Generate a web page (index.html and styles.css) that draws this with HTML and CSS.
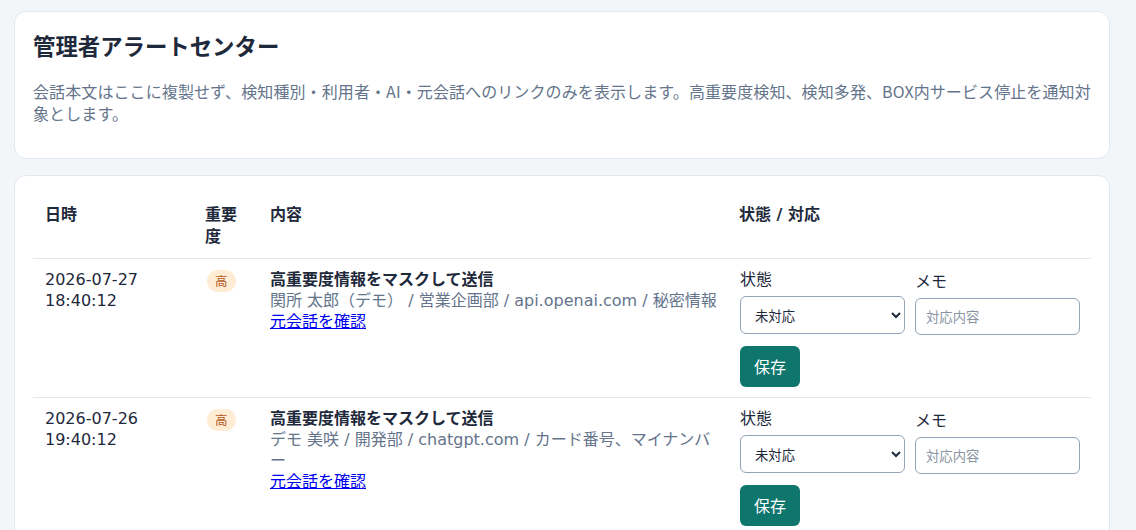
FILE: index.html
```html
<!DOCTYPE html>
<html lang="ja">
<head>
<meta charset="utf-8">
<title>管理者アラートセンター</title>
<link rel="stylesheet" href="styles.css">
</head>
<body>
<main class="page">
  <section class="card intro">
    <h1 class="title">管理者アラートセンター</h1>
    <p class="desc">会話本文はここに複製せず、検知種別・利用者・AI・元会話へのリンクのみを表示します。高重要度検知、検知多発、BOX内サービス停止を通知対象とします。</p>
  </section>
  <section class="card">
    <table class="alerts">
      <colgroup>
        <col class="c-date"><col class="c-sev"><col class="c-body"><col class="c-state">
      </colgroup>
      <thead>
        <tr><th>日時</th><th>重要度</th><th>内容</th><th>状態 / 対応</th></tr>
      </thead>
      <tbody>
        <tr>
          <td>2026-07-27<br>18:40:12</td>
          <td><span class="badge">高</span></td>
          <td class="body-cell">
            <div class="a-title">高重要度情報をマスクして送信</div>
            <div class="a-sub">関所 太郎（デモ） / 営業企画部 / api.openai.com / 秘密情報</div>
            <a href="#" class="a-link">元会話を確認</a>
          </td>
          <td>
            <form class="resp">
              <label class="field"><span class="lbl">状態</span>
                <select class="sel"><option>未対応</option><option>対応中</option><option>完了</option></select>
              </label>
              <label class="field memo"><span class="lbl">メモ</span>
                <input class="inp" type="text" placeholder="対応内容">
              </label>
              <button type="button" class="save">保存</button>
            </form>
          </td>
        </tr>
        <tr>
          <td>2026-07-26<br>19:40:12</td>
          <td><span class="badge">高</span></td>
          <td class="body-cell">
            <div class="a-title">高重要度情報をマスクして送信</div>
            <div class="a-sub">デモ 美咲 / 開発部 / chatgpt.com / カード番号、マイナンバー</div>
            <a href="#" class="a-link">元会話を確認</a>
          </td>
          <td>
            <form class="resp">
              <label class="field"><span class="lbl">状態</span>
                <select class="sel"><option>未対応</option><option>対応中</option><option>完了</option></select>
              </label>
              <label class="field memo"><span class="lbl">メモ</span>
                <input class="inp" type="text" placeholder="対応内容">
              </label>
              <button type="button" class="save">保存</button>
            </form>
          </td>
        </tr>
      </tbody>
    </table>
  </section>
</main>
</body>
</html>
```
FILE: styles.css
```css
html, body {
  margin: 0;
  background: #f3f6f9;
}
body {
  font-family: "DejaVu Sans", "Noto Sans CJK JP", sans-serif;
  font-size: 16px;
  color: #1e293b;
}
.page {
  padding: 11px 14px;
  width: 1096px;
  display: flex;
  flex-direction: column;
  gap: 16px;
}
.card {
  background: #ffffff;
  border: 1px solid #e2e8f0;
  border-radius: 12px;
  padding: 18px;
}
.title {
  margin: 0;
  font-family: "Noto Sans CJK JP", sans-serif;
  font-size: 22.4px;
  line-height: 30px;
  font-weight: 700;
  color: #1e293b;
}
.desc {
  margin: 20px 0 16px;
  font-family: "Noto Sans CJK JP", sans-serif;
  font-size: 16px;
  line-height: 22px;
  letter-spacing: 0.1px;
  color: #64748b;
}
.alerts {
  width: 100%;
  border-collapse: collapse;
  table-layout: fixed;
}
.c-date { width: 160px; }
.c-sev { width: 65px; }
.c-body { width: 469px; }
.c-state { width: 364px; }
.alerts th {
  text-align: left;
  vertical-align: top;
  font-weight: 700;
  line-height: 22px;
  padding: 10px 12px;
  border-bottom: 1px solid #e2e8f0;
}
.alerts td {
  vertical-align: top;
  line-height: 21px;
  padding: 10px 12px;
  border-bottom: 1px solid #e2e8f0;
}
.alerts td.body-cell {
  padding-right: 8px;
}
.badge {
  display: inline-block;
  margin: 1px 0 0 2px;
  padding: 3px 8px;
  font-family: "Noto Sans CJK JP", sans-serif;
  font-size: 12.5px;
  line-height: 16px;
  border-radius: 999px;
  background: #feecd5;
  color: #b4581c;
}
.a-title {
  font-weight: 700;
}
.a-sub {
  color: #64748b;
}
.a-link {
  color: #0000ee;
}
.resp {
  display: grid;
  grid-template-columns: 165px 165px;
  column-gap: 10px;
  align-items: start;
  margin-left: 1px;
}
.field {
  display: flex;
  flex-direction: column;
  gap: 6px;
}
.memo {
  padding-top: 2px;
}
.lbl {
  line-height: 21px;
}
.sel, .inp {
  box-sizing: border-box;
  width: 165px;
  font-family: "Noto Sans CJK JP", sans-serif;
  font-size: 13.33px;
  color: #1e293b;
  background: #ffffff;
  border: 1px solid #94a3b8;
  border-radius: 6px;
}
.sel {
  height: 38px;
  padding: 0 8px 0 10px;
}
.inp {
  height: 37px;
  padding: 0 10px;
}
.inp::placeholder {
  color: #8a94a3;
}
.save {
  grid-column: 1;
  justify-self: start;
  margin-top: 11px;
  padding: 10px 14px;
  font-family: "Noto Sans CJK JP", sans-serif;
  font-size: 16px;
  line-height: 21px;
  color: #ffffff;
  background: #0f766e;
  border: none;
  border-radius: 6px;
}
```
